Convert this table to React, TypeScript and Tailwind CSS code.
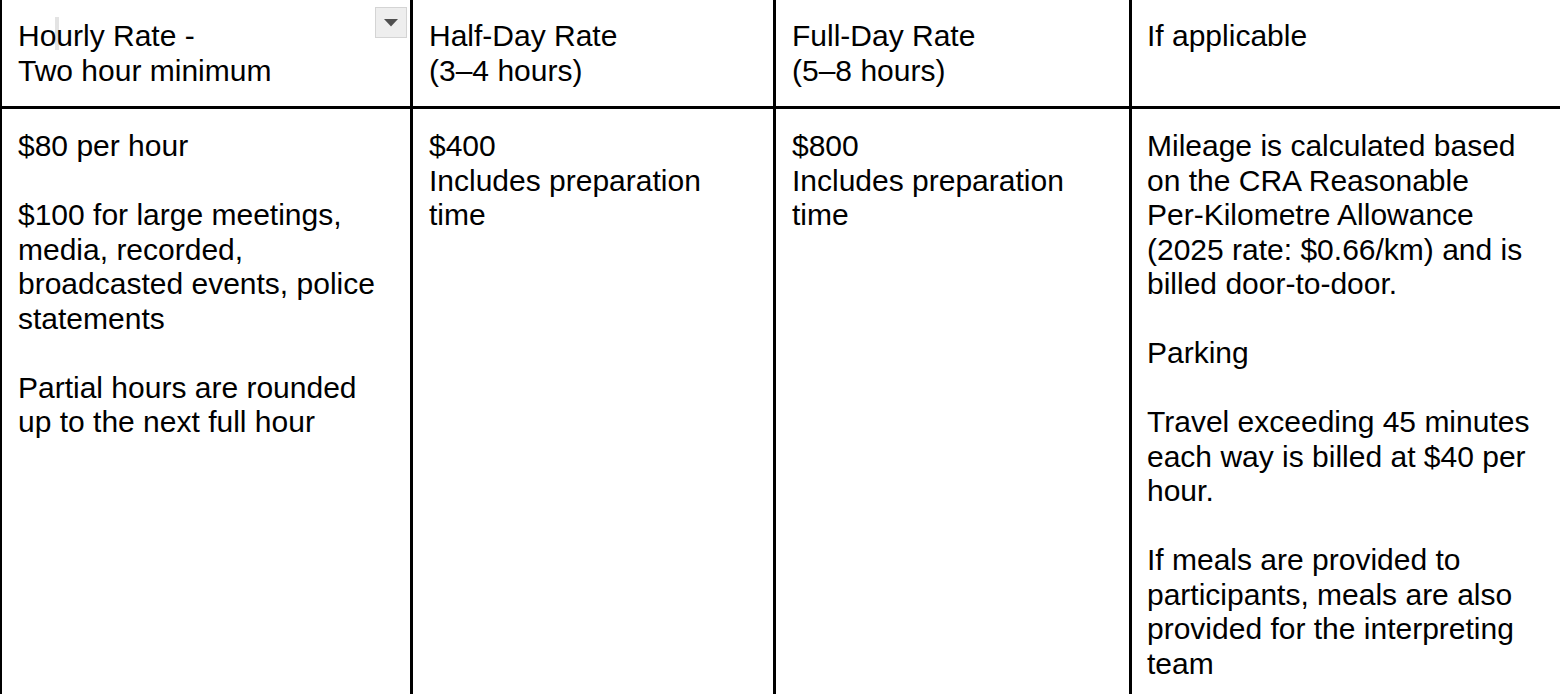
import React from "react";

const font = { fontFamily: '"Liberation Sans", Arial, sans-serif' };

function Lines({ lines }: { lines: string[] }) {
  return (
    <>
      {lines.map((l, i) => (
        <div key={i} className="whitespace-nowrap h-[34.5px]">
          {l === "" ? "\u00a0" : l}
        </div>
      ))}
    </>
  );
}

export default function App() {
  const header = [
    ["Hourly Rate -", "Two hour minimum"],
    ["Half-Day Rate", "(3–4 hours)"],
    ["Full-Day Rate", "(5–8 hours)"],
    ["If applicable"],
  ];
  const body = [
    [
      "$80 per hour",
      "",
      "$100 for large meetings,",
      "media, recorded,",
      "broadcasted events, police",
      "statements",
      "",
      "Partial hours are rounded",
      "up to the next full hour",
    ],
    ["$400", "Includes preparation", "time"],
    ["$800", "Includes preparation", "time"],
    [
      "Mileage is calculated based",
      "on the CRA Reasonable",
      "Per-Kilometre Allowance",
      "(2025 rate: $0.66/km) and is",
      "billed door-to-door.",
      "",
      "Parking",
      "",
      "Travel exceeding 45 minutes",
      "each way is billed at $40 per",
      "hour.",
      "",
      "If meals are provided to",
      "participants, meals are also",
      "provided for the interpreting",
      "team",
    ],
  ];
  const widths = ["w-[411px]", "w-[363px]", "w-[356px]", "w-[460px]"];
  const borders = [
    "border-r-[3px] border-black",
    "border-r-[3px] border-black",
    "border-r-[3px] border-black",
    "",
  ];
  const pads = ["pl-[16px]", "pl-[16px]", "pl-[16px]", "pl-[15px]"];

  return (
    <div
      className="w-[1560px] h-[694px] overflow-hidden bg-white text-black text-[30px] leading-[34.5px]"
      style={font}
    >
      <div className="border-l-2 border-black w-[1600px]">
        <div className="flex h-[109px] border-b-[3px] border-black">
          {header.map((h, i) => (
            <div
              key={i}
              className={`${widths[i]} ${borders[i]} ${pads[i]} shrink-0 relative pt-[19px]`}
            >
              {i === 0 && (
                <>
                  <div className="absolute left-[53px] top-[17px] w-[4px] h-[33px] bg-[#e3e3e3]" />
                  <div className="absolute left-[373px] top-[7px] w-[32px] h-[31px] bg-[#eeeeee] border border-[#d4d4d4] flex items-center justify-center">
                    <svg width="16" height="9" viewBox="0 0 16 9">
                      <path d="M1 1 H15 L8 8.5 Z" fill="#505050" />
                    </svg>
                  </div>
                </>
              )}
              <div className="relative">
                <Lines lines={h} />
              </div>
            </div>
          ))}
        </div>
        <div className="flex h-[600px]">
          {body.map((b, i) => (
            <div
              key={i}
              className={`${widths[i]} ${borders[i]} ${pads[i]} shrink-0 pt-[20px]`}
            >
              <Lines lines={b} />
            </div>
          ))}
        </div>
      </div>
    </div>
  );
}
